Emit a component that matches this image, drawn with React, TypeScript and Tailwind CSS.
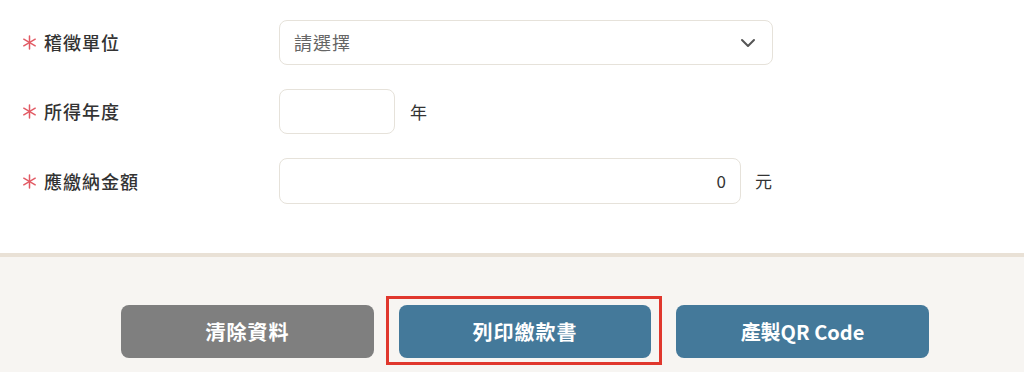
import React from "react";

const font = { fontFamily: '"Noto Sans CJK TC", "Noto Sans", sans-serif' };

function Star() {
  return (
    <svg width="15" height="15" viewBox="0 0 16 16" className="shrink-0">
      <g stroke="#e25a64" strokeWidth="1.6" strokeLinecap="round">
        <line x1="8" y1="1" x2="8" y2="15" />
        <line x1="1.9" y1="4.5" x2="14.1" y2="11.5" />
        <line x1="1.9" y1="11.5" x2="14.1" y2="4.5" />
      </g>
    </svg>
  );
}

function Label({ text }: { text: string }) {
  return (
    <div className="flex items-center w-[279px] pl-[22px] gap-[7px]">
      <Star />
      <span className="text-[18px] tracking-[1px] font-medium text-[#333333]">{text}</span>
    </div>
  );
}

export default function App() {
  return (
    <div className="w-[1024px] h-[384px] bg-white overflow-hidden" style={font}>
      <div className="flex flex-col gap-[24px] pt-[20px] pb-[49px]">
        <div className="flex items-center h-[45px]">
          <Label text="稽徵單位" />
          <div className="w-[494px] h-[45px] border border-[#e6e2da] rounded-[8px] flex items-center justify-between pl-[14px] pr-[16px]">
            <span className="text-[18px] tracking-[1px] text-[#666666]">請選擇</span>
            <svg width="16" height="10" viewBox="0 0 16 10">
              <path d="M2 2 L8 8 L14 2" fill="none" stroke="#555555" strokeWidth="2" strokeLinecap="round" strokeLinejoin="round" />
            </svg>
          </div>
        </div>
        <div className="flex items-center h-[45px]">
          <Label text="所得年度" />
          <div className="w-[116px] h-[45px] border border-[#e6e2da] rounded-[8px]" />
          <span className="ml-[15px] text-[17px] text-[#333333]">年</span>
        </div>
        <div className="flex items-center h-[46px]">
          <Label text="應繳納金額" />
          <div className="w-[462px] h-[46px] border border-[#e6e2da] rounded-[8px] flex items-center justify-end pr-[14px]">
            <span className="text-[17px] text-[#333333]">0</span>
          </div>
          <span className="ml-[14px] text-[17px] text-[#333333]">元</span>
        </div>
      </div>
      <div className="h-[4px] bg-[#e9e1d6]" />
      <div className="h-[115px] bg-[#f7f5f2] flex items-start pt-[48px] pl-[121px] gap-[25px]">
        <button className="w-[253px] h-[53px] rounded-[8px] bg-[#7f7f7f] text-white text-[20px] font-bold tracking-[1px]">
          清除資料
        </button>
        <div className="relative">
          <button className="w-[252px] h-[53px] rounded-[8px] bg-[#44799a] text-white text-[20px] font-bold tracking-[1px]">
            列印繳款書
          </button>
          <div className="absolute left-[-13px] right-[-11px] top-[-9px] bottom-[-7px] border-[3px] border-[#e0372d] pointer-events-none" />
        </div>
        <button className="w-[253px] h-[53px] rounded-[8px] bg-[#44799a] text-white text-[20px] font-bold">
          產製QR Code
        </button>
      </div>
    </div>
  );
}
